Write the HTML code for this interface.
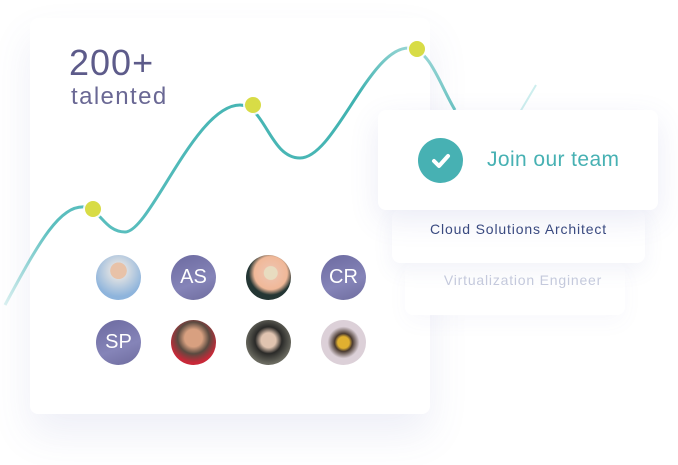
<!DOCTYPE html>
<html><head><style>
body{margin:0;width:678px;height:465px;background:#fff;position:relative;overflow:hidden;font-family:"Liberation Sans",sans-serif}
.card{position:absolute;background:#fff;border-radius:8px}
.av{position:absolute;width:45px;height:45px;border-radius:50%;color:#fff;font-size:20px;text-align:center;line-height:45px;background:linear-gradient(160deg,#6c6aa0,#8584b8 60%,#6e6c9e)}
</style></head><body>
<div class="card" style="left:30px;top:18px;width:400px;height:396px;box-shadow:0 20px 40px rgba(90,100,180,0.10)"></div>
<div class="card" style="left:405px;top:263px;width:220px;height:52px;box-shadow:0 8px 20px rgba(90,100,180,0.04)"></div>
<div class="card" style="left:392px;top:210px;width:253px;height:53px;box-shadow:0 8px 20px rgba(90,100,180,0.08)"></div>
<svg width="678" height="465" style="position:absolute;left:0;top:0">
<defs><linearGradient id="g" x1="0" y1="1" x2="1" y2="0"><stop offset="0" stop-color="#4ab8b8" stop-opacity="0.2"/><stop offset="0.2" stop-color="#4ab8b8" stop-opacity="0.9"/><stop offset="0.8" stop-color="#3fb2b0"/><stop offset="1" stop-color="#3fb2b0" stop-opacity="0.4"/></linearGradient></defs>
<path d="M5,305 C40,240 60,205 85,207 C100,209 105,232 125,232 C150,232 195,105 240,105 C265,105 270,158 300,158 C335,158 370,45 410,48 C430,50 440,85 455,110" fill="none" stroke="url(#g)" stroke-width="3"/>
<path d="M520,112 L536,85" stroke="#cdeeee" stroke-width="2"/>
<circle cx="93" cy="209" r="10" fill="#fff" opacity="0.9"/><circle cx="93" cy="209" r="8" fill="#d8dc46"/>
<circle cx="253" cy="105" r="10" fill="#fff" opacity="0.9"/><circle cx="253" cy="105" r="8" fill="#d8dc46"/>
<circle cx="417" cy="49" r="10" fill="#fff" opacity="0.9"/><circle cx="417" cy="49" r="8" fill="#d8dc46"/>
</svg>
<div style="position:absolute;left:69px;top:42px;font-size:36px;color:#5d5b8a;letter-spacing:1px">200+</div>
<div style="position:absolute;left:71px;top:83px;font-size:24px;color:#6a6894;letter-spacing:1.4px">talented</div>
<div class="av" style="left:96px;top:255px;background:radial-gradient(circle at 50% 35%,#e8c2a8 0 22%,#d8dde2 23%,#8eb4dc 70%)"></div>
<div class="av" style="left:171px;top:255px">AS</div>
<div class="av" style="left:246px;top:255px;background:radial-gradient(circle at 55% 40%,#e8dcc0 0 18%,#efc0a8 20%,#f0b898 45%,#243634 60%)"></div>
<div class="av" style="left:321px;top:255px">CR</div>
<div class="av" style="left:96px;top:320px">SP</div>
<div class="av" style="left:171px;top:320px;background:radial-gradient(circle at 50% 40%,#d8a080 0 25%,#5a4a40 45%,#c82838 70%)"></div>
<div class="av" style="left:246px;top:320px;background:radial-gradient(circle at 50% 45%,#e0c4b0 0 22%,#2a2a28 40%,#6a6a60 70%)"></div>
<div class="av" style="left:321px;top:320px;background:radial-gradient(circle at 50% 50%,#e0b030 0 18%,#4a3a30 28%,#dcd0d8 50%)"></div>
<div class="card" style="left:378px;top:110px;width:280px;height:100px;box-shadow:0 10px 30px rgba(90,100,180,0.12)">
<div style="position:absolute;left:40px;top:28px;width:45px;height:45px;border-radius:50%;background:#47b1b3"></div>
<svg style="position:absolute;left:40px;top:28px" width="45" height="45"><path d="M16,23 L21,28 L30,18" fill="none" stroke="#fff" stroke-width="4" stroke-linecap="round" stroke-linejoin="round"/></svg>
<div style="position:absolute;left:109px;top:38px;font-size:21px;color:#47b1b3;letter-spacing:0.4px">Join our team</div>
</div>
<div style="position:absolute;left:392px;top:221px;width:253px;text-align:center;font-size:14px;color:#3a4a80;letter-spacing:0.85px">Cloud Solutions Architect</div>
<div style="position:absolute;left:405px;top:272px;width:236px;text-align:center;font-size:14px;color:#c4c9dc;letter-spacing:0.8px">Virtualization Engineer</div>
</body></html>
